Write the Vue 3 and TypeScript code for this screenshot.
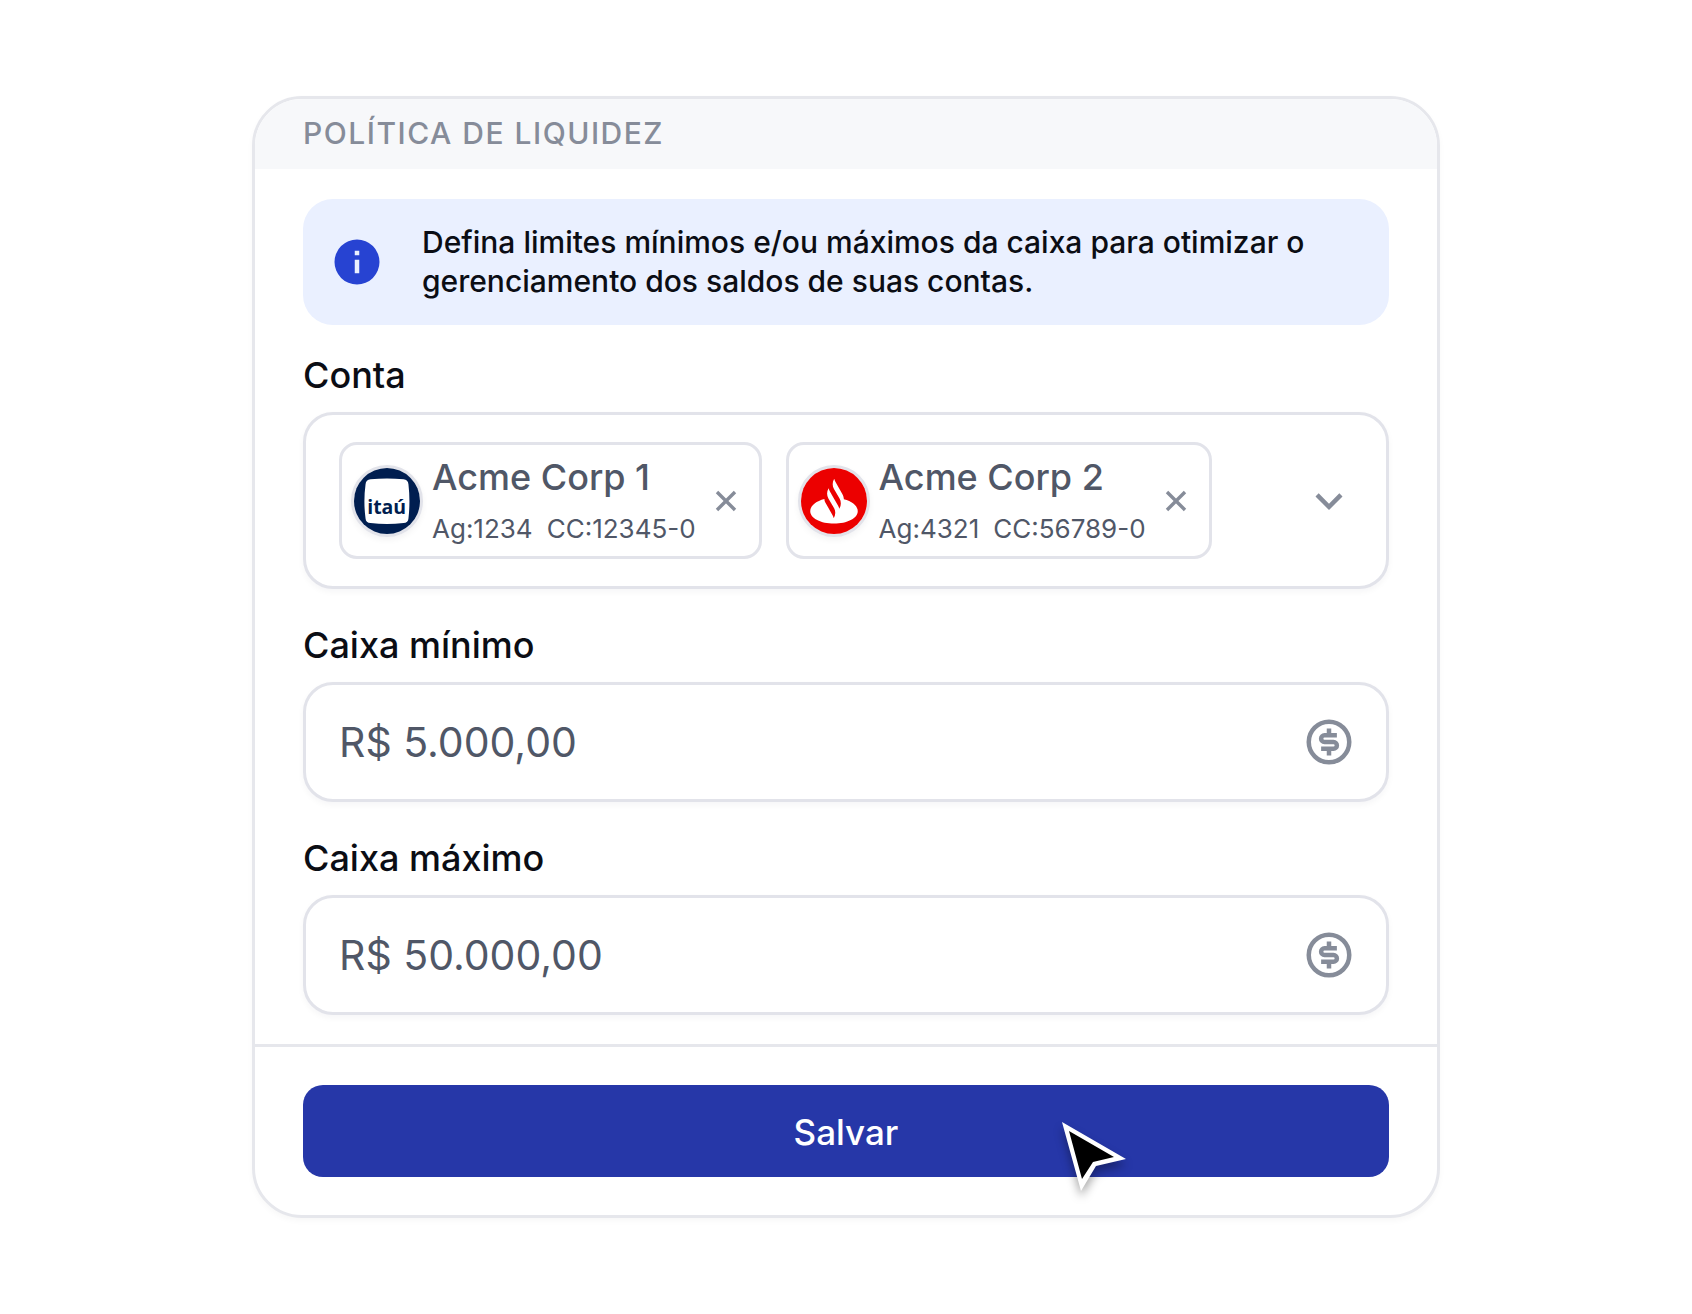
<script setup lang="ts">
import { ref } from 'vue'

interface Account {
  id: number
  bank: 'itau' | 'santander'
  name: string
  branch: string
  number: string
}

const accounts = ref<Account[]>([
  { id: 1, bank: 'itau', name: 'Acme Corp 1', branch: '1234', number: '12345-0' },
  { id: 2, bank: 'santander', name: 'Acme Corp 2', branch: '4321', number: '56789-0' },
])

const limits = ref([
  { id: 'caixa-minimo', label: 'Caixa mínimo', value: 'R$ 5.000,00' },
  { id: 'caixa-maximo', label: 'Caixa máximo', value: 'R$ 50.000,00' },
])

function removeAccount(id: number): void {
  accounts.value = accounts.value.filter((account) => account.id !== id)
}
</script>

<template>
  <main class="page">
    <form class="card" @submit.prevent>
      <header class="card-header">
        <h1 class="title">POLÍTICA DE LIQUIDEZ</h1>
      </header>

      <div class="card-body">
        <div class="notice">
          <svg class="icon notice-icon" viewBox="0 0 24 24" aria-hidden="true">
            <path d="M12 2a10 10 0 1 0 0 20 10 10 0 0 0 0-20zm1 15h-2v-6h2v6zm0-8h-2V7h2v2z" />
          </svg>
          <p class="notice-text">
            Defina limites mínimos e/ou máximos da caixa para otimizar o gerenciamento dos saldos de suas contas.
          </p>
        </div>

        <div class="field">
          <label class="label" for="conta">Conta</label>
          <div class="control accounts">
            <ul class="chips">
              <li v-for="account in accounts" :key="account.id" class="chip">
                <span class="logo">
                  <svg v-if="account.bank === 'itau'" viewBox="41 50 200 200" aria-hidden="true">
                    <rect x="41" y="50" width="200" height="200" fill="#001e50" />
                    <path
                      d="M91 84Q141 80 191 84Q205 85 206 99Q212 151 206 203Q205 216 191 217Q141 223 91 217Q77 216 76 203Q69 151 76 99Q77 85 91 84Z"
                      fill="#fff"
                    />
                    <text class="logo-text" x="140" y="189" text-anchor="middle">itaú</text>
                  </svg>
                  <svg v-else viewBox="47 50 200 200" aria-hidden="true">
                    <rect x="47" y="50" width="200" height="200" fill="#ec0000" />
                    <path
                      transform="translate(75 79) scale(6)"
                      fill="#fff"
                      d="M17 10.9c-.06-.9-.34-1.87-.8-2.65L12.7 2.14c-.27-.46-.46-.97-.56-1.5l-.15.25c-.87 1.5-.87 3.35 0 4.86l2.81 4.86c.87 1.5.87 3.36 0 4.86l-.15.25c-.1-.53-.29-1.03-.56-1.5l-2.57-4.46-1.64-2.85c-.27-.46-.46-.97-.56-1.5l-.15.25c-.87 1.5-.87 3.35 0 4.85l2.82 4.87c.87 1.5.87 3.35 0 4.85l-.15.25c-.1-.53-.29-1.03-.56-1.5l-3.51-6.1c-.47-.81-.6-1.3-.6-2.1C2.8 11.9 0 14.2 0 17.02c0 3.6 5.37 6.23 12 6.23s12-2.63 12-6.23c0-2.8-2.8-5-7-6.12z"
                    />
                  </svg>
                </span>
                <span class="chip-info">
                  <span class="chip-name">{{ account.name }}</span>
                  <span class="chip-numbers">
                    <span>Ag:{{ account.branch }}</span>
                    <span>CC:{{ account.number }}</span>
                  </span>
                </span>
                <button
                  class="plain remove"
                  type="button"
                  :aria-label="`Remover ${account.name}`"
                  @click="removeAccount(account.id)"
                >
                  <svg viewBox="0 0 24 24" aria-hidden="true">
                    <path d="M3 3l18 18M21 3L3 21" fill="none" stroke="currentColor" stroke-width="3.400" />
                  </svg>
                </button>
              </li>
            </ul>
            <button id="conta" class="plain" type="button" aria-haspopup="listbox">
              <svg class="icon" viewBox="0 0 24 24" aria-hidden="true">
                <path d="M7.41 8.59L12 13.17l4.59-4.58L18 10l-6 6-6-6z" />
              </svg>
            </button>
          </div>
        </div>

        <div v-for="limit in limits" :key="limit.id" class="field">
          <label class="label" :for="limit.id">{{ limit.label }}</label>
          <div class="control">
            <input :id="limit.id" v-model="limit.value" class="input" type="text" inputmode="decimal" />
            <svg class="icon" viewBox="0 0 24 24" aria-hidden="true">
              <g fill="none" stroke="currentColor" stroke-width="2">
                <circle cx="12" cy="12" r="9" />
                <path d="M15.5 9H10a1.5 1.5 0 0 0 0 3h4a1.5 1.5 0 0 1 0 3H8.500M12 6v3M12 15v3" />
              </g>
            </svg>
          </div>
        </div>
      </div>

      <footer class="card-footer">
        <button class="save" type="submit">Salvar</button>
        <svg class="cursor" viewBox="0 0 64 70" aria-hidden="true">
          <path d="M0 0L64 37L34 44L19 69Z" fill="#fff" />
          <path d="M7 9L52 35L31 40L20 57Z" fill="#000" />
        </svg>
      </footer>
    </form>
  </main>
</template>

<style>
body {
  background: #fff;
}
</style>

<style scoped>
.page {
  box-sizing: border-box;
  padding: 96px 24px;
  font-family: Inter, "Liberation Sans", sans-serif;
  font-weight: 500;
  color: #0b0d14;
}

.card {
  box-sizing: border-box;
  max-width: 1188px;
  margin: 0 auto;
  border: 3px solid #e6e7ec;
  border-radius: 50px;
  background: #fff;
  box-shadow: 0 3px 6px rgba(16, 24, 40, 0.03);
}

.card-header {
  padding: 15px 48px 16px;
  border-radius: 47px 47px 0 0;
  background: #f7f8fa;
}

.title {
  margin: 0;
  font-size: 30px;
  line-height: 39px;
  font-weight: 500;
  letter-spacing: 0.05em;
  color: #868c99;
}

.card-body {
  display: flex;
  flex-direction: column;
  gap: 34px;
  padding: 30px 48px 29px;
}

.notice {
  display: flex;
  align-items: center;
  gap: 38px;
  margin-bottom: -6px;
  padding: 24px 27px;
  border-radius: 30px;
  background: #eaf0ff;
}

.notice-text {
  margin: 0;
  font-size: 30px;
  line-height: 39px;
}

.icon {
  display: block;
  flex: none;
  width: 54px;
  height: 54px;
  fill: currentColor;
}

.notice-icon {
  color: #2743d2;
}

.field {
  display: flex;
  flex-direction: column;
  gap: 15px;
}

.label {
  font-size: 36px;
  line-height: 44px;
}

.control {
  display: flex;
  align-items: center;
  box-sizing: border-box;
  min-height: 120px;
  padding: 27px 30px 27px 33px;
  border: 3px solid #e2e3ea;
  border-radius: 30px;
  background: #fff;
  box-shadow: 0 3px 6px rgba(16, 24, 40, 0.04);
  color: #868c99;
}

.accounts {
  justify-content: space-between;
}

.chips {
  display: flex;
  flex-wrap: wrap;
  gap: 24px;
  margin: 0;
  padding: 0;
  list-style: none;
}

.chip {
  display: flex;
  align-items: center;
  box-sizing: border-box;
  min-height: 117px;
  padding: 0 21px 0 9px;
  border: 3px solid #e2e3ea;
  border-radius: 18px;
}

.logo {
  flex: none;
  box-sizing: border-box;
  width: 72px;
  height: 72px;
  overflow: hidden;
  border: 3px solid #e2e3ea;
  border-radius: 50%;
  box-shadow: 0 3px 6px rgba(16, 24, 40, 0.05);
}

.logo svg,
.remove svg {
  display: block;
  width: 100%;
  height: 100%;
}

.logo-text {
  font-family: "Open Sans", "Noto Sans", sans-serif;
  font-size: 59px;
  font-weight: 700;
  fill: #001e50;
}

.chip-info {
  display: flex;
  flex-direction: column;
  gap: 13px;
  margin: 0 18px 0 9px;
  color: #505767;
}

.chip-name {
  font-size: 36px;
  line-height: 44px;
}

.chip-numbers {
  display: flex;
  gap: 14px;
  font-size: 26px;
  line-height: 34px;
  font-weight: 400;
}

.plain {
  flex: none;
  padding: 0;
  border: 0;
  background: none;
  color: #868c99;
  cursor: pointer;
}

.remove {
  width: 24px;
  height: 24px;
}

.input {
  flex: 1;
  min-width: 0;
  padding: 0;
  border: 0;
  outline: none;
  background: none;
  font-family: inherit;
  font-size: 41px;
  line-height: 54px;
  font-weight: 400;
  color: #505767;
}

.card-footer {
  position: relative;
  padding: 38px 48px;
  border-top: 3px solid #e6e7ec;
}

.save {
  display: block;
  width: 100%;
  padding: 25px 24px 23px;
  border: 0;
  border-radius: 20px;
  background: #2637a8;
  font-family: inherit;
  font-size: 35px;
  line-height: 44px;
  font-weight: 500;
  color: #fff;
  cursor: pointer;
}

.cursor {
  position: absolute;
  top: 75px;
  left: 68.3%;
  width: 64px;
  height: 70px;
  overflow: visible;
  filter: drop-shadow(0 6px 5px rgba(0, 0, 0, 0.35));
  pointer-events: none;
}
</style>
